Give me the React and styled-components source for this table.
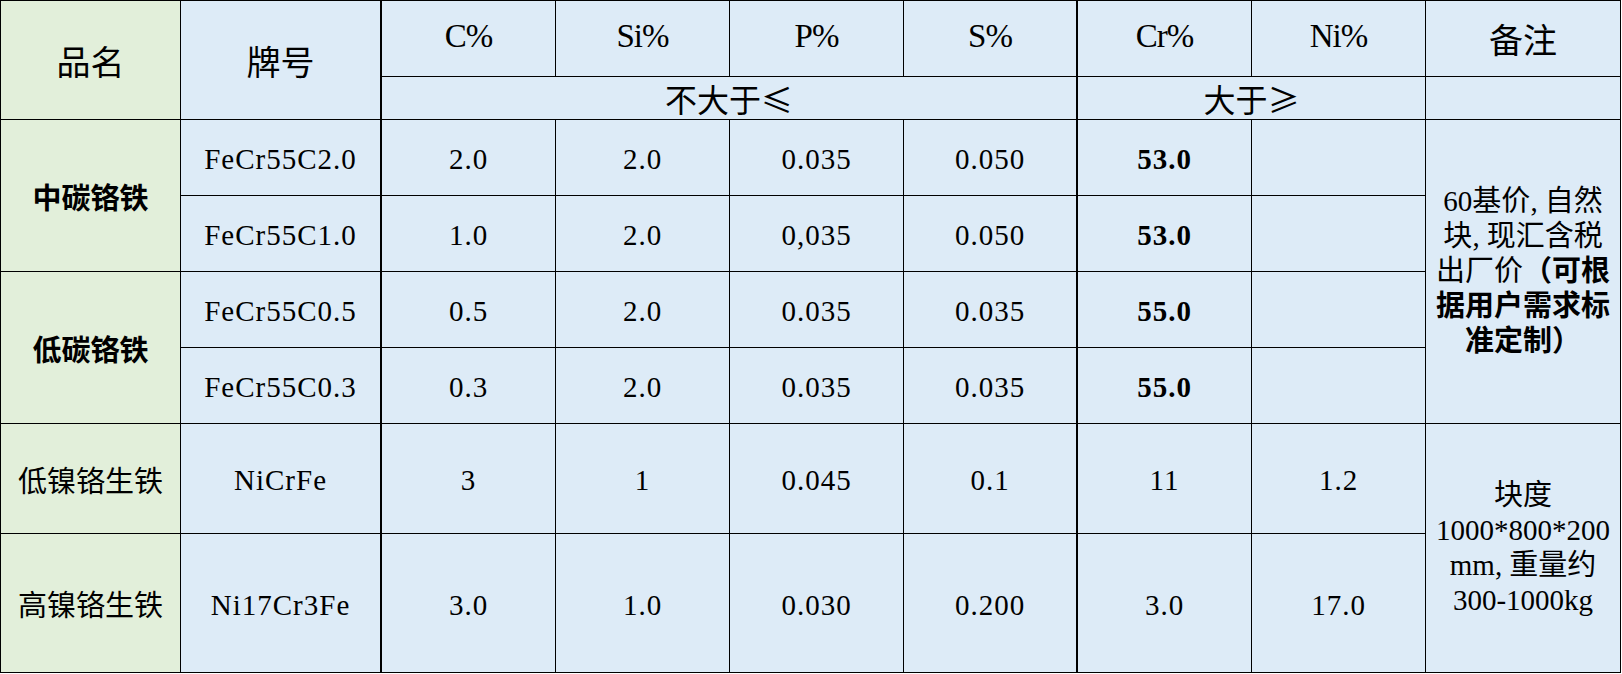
import React from 'react';
import styled, { createGlobalStyle, css } from 'styled-components';

const GlobalStyle = createGlobalStyle`
  html, body {
    margin: 0;
    padding: 0;
    background: #fff;
  }
`;

const serif = `'Liberation Serif', 'Noto Sans CJK SC', serif`;
const cjk = `'Noto Sans CJK SC', 'Liberation Serif', sans-serif`;

let Sheet = styled.div`
  display: grid;
  grid-template-columns: 180px 201px 174px 174px 174px 174px 174px 174px 195px;
  grid-template-rows: 76px 43px 76px 76px 76px 76px 110px 139px;
  width: max-content;
  border-top: 1px solid #000;
  border-left: 1px solid #000;
  color: #000;
`;

const kinds = {
  title: css`
    font-family: ${cjk};
    font-size: 34px;
  `,
  head: css`
    font-family: ${serif};
    font-size: 33px;
    letter-spacing: -1px;
    padding-bottom: 4px;
  `,
  range: css`
    font-family: ${cjk};
    font-size: 32px;
  `,
  name: css`
    font-family: ${cjk};
    font-size: 29px;
  `,
  value: css`
    font-family: ${serif};
    font-size: 29px;
    letter-spacing: 1px;
    padding-top: 4px;
  `,
  note: css`
    font-family: ${serif};
    font-size: 29px;
    line-height: 35px;
  `
};

let Cell = styled.div`
  box-sizing: border-box;
  display: flex;
  align-items: center;
  justify-content: center;
  text-align: center;
  grid-column: span ${({ $cols }) => $cols || 1};
  grid-row: span ${({ $rows }) => $rows || 1};
  background: ${({ $green }) => ($green ? '#e2efda' : '#ddebf7')};
  border-right: ${({ $thick }) => ($thick ? 2 : 1)}px solid #000;
  border-bottom: 1px solid #000;
  font-weight: ${({ $bold }) => ($bold ? 700 : 400)};
  ${({ $kind }) => kinds[$kind || 'value']};
`;

let Strong = styled.span`
  font-weight: 700;
`;

// SimSun's half-width comma leaves a gap after it
let Comma = styled.span`
  margin-right: 7px;
`;

const heads = ['C%', 'Si%', 'P%', 'S%', 'Cr%', 'Ni%'];

const groups = [
  {
    name: '中碳铬铁',
    bold: true,
    rows: [
      ['FeCr55C2.0', '2.0', '2.0', '0.035', '0.050', '53.0', ''],
      ['FeCr55C1.0', '1.0', '2.0', '0,035', '0.050', '53.0', '']
    ]
  },
  {
    name: '低碳铬铁',
    bold: true,
    rows: [
      ['FeCr55C0.5', '0.5', '2.0', '0.035', '0.035', '55.0', ''],
      ['FeCr55C0.3', '0.3', '2.0', '0.035', '0.035', '55.0', '']
    ]
  }
];

const pigIron = [
  ['低镍铬生铁', 'NiCrFe', '3', '1', '0.045', '0.1', '11', '1.2'],
  ['高镍铬生铁', 'Ni17Cr3Fe', '3.0', '1.0', '0.030', '0.200', '3.0', '17.0']
];

function ValueCells({ row, boldCr }) {
  return row.map((v, i) => (
    <Cell key={i} $thick={i === 0 || i === 4} $bold={boldCr && i === 5}>
      {v}
    </Cell>
  ));
}

export default function App() {
  return (
    <>
      <GlobalStyle />
      <Sheet>
        <Cell $kind="title" $rows={2} $green>品名</Cell>
        <Cell $kind="title" $rows={2} $thick>牌号</Cell>
        {heads.map((h, i) => (
          <Cell key={h} $kind="head" $thick={i === 3}>
            {h}
          </Cell>
        ))}
        <Cell $kind="title">备注</Cell>
        <Cell $kind="range" $cols={4} $thick>不大于≤</Cell>
        <Cell $kind="range" $cols={2}>大于≥</Cell>
        <Cell />

        {groups.map((g, gi) =>
          g.rows.map((row, ri) => (
            <React.Fragment key={`${gi}${ri}`}>
              {ri === 0 && (
                <Cell $kind="name" $rows={2} $green $bold={g.bold}>
                  {g.name}
                </Cell>
              )}
              <ValueCells row={row} boldCr />
              {gi === 0 && ri === 0 && (
                <Cell $kind="note" $rows={4}>
                  <div>
                    60基价<Comma>,</Comma>自然
                    <br />
                    块<Comma>,</Comma>现汇含税
                    <br />
                    出厂价<Strong>（可根</Strong>
                    <br />
                    <Strong>据用户需求标</Strong>
                    <br />
                    <Strong>准定制）</Strong>
                  </div>
                </Cell>
              )}
            </React.Fragment>
          ))
        )}

        {pigIron.map(([name, ...row], ri) => (
          <React.Fragment key={name}>
            <Cell $kind="name" $green>
              {name}
            </Cell>
            <ValueCells row={row} />
            {ri === 0 && (
              <Cell $kind="note" $rows={2}>
                <div>
                  块度
                  <br />
                  1000*800*200
                  <br />
                  mm<Comma>,</Comma>重量约
                  <br />
                  300-1000kg
                </div>
              </Cell>
            )}
          </React.Fragment>
        ))}
      </Sheet>
    </>
  );
}
